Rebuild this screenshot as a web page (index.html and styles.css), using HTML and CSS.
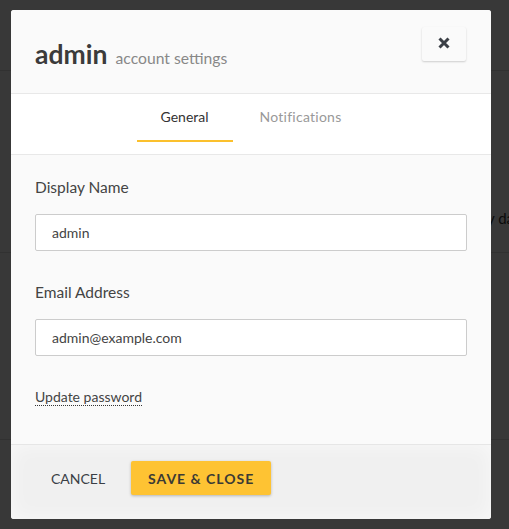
FILE: index.html
```html
<!DOCTYPE html>
<html>
<head>
<meta charset="utf-8">
<link rel="stylesheet" href="styles.css">
</head>
<body>
<div class="page">
  <div class="page-head"><span class="page-title">General</span></div>
  <div class="page-row"><span class="page-text">y data</span></div>
  <div class="page-row2"></div>
</div>
<div class="overlay"></div>
<div class="modal">
  <div class="modal-header">
    <h1 class="title"><span class="title-main">admin</span> <span class="title-sub">account settings</span></h1>
    <button class="close-btn" aria-label="Close">
      <svg width="14" height="14" viewBox="0 0 14 14"><path d="M2.5 2.5 L11.5 11.5 M11.5 2.5 L2.5 11.5" stroke="#3b3f46" stroke-width="3" stroke-linecap="butt"/></svg>
    </button>
  </div>
  <div class="tabs">
    <div class="tab active">General</div>
    <div class="tab">Notifications</div>
  </div>
  <div class="modal-body">
    <label class="field">
      <span class="field-label">Display Name</span>
      <input class="field-input" value="admin">
    </label>
    <label class="field">
      <span class="field-label">Email Address</span>
      <input class="field-input" value="admin@example.com">
    </label>
    <a class="link">Update password</a>
  </div>
  <div class="modal-footer">
    <button class="btn-cancel">CANCEL</button>
    <button class="btn-save">SAVE &amp; CLOSE</button>
  </div>
</div>
</body>
</html>
```
FILE: styles.css
```css
* { box-sizing: border-box; }
html, body { margin: 0; padding: 0; }
body {
  width: 509px;
  height: 529px;
  overflow: hidden;
  font-family: Lato, "Open Sans", sans-serif;
  background: #fff;
  position: relative;
}
.page { color: #333; }
.page-head {
  height: 71px;
  border-bottom: 1px solid #ddd;
  padding: 0 20px;
}
.page-title { font-size: 24px; line-height: 28px; display: inline-block; padding-top: 4px; }
.page-row {
  height: 182px;
  border-bottom: 1px solid #ddd;
  padding: 138px 0 0 487px;
  font-size: 15px;
  white-space: nowrap;
  overflow: hidden;
}
.page-text { display: inline-block; }
.page-row2 { height: 187px; border-bottom: 1px solid #ddd; }
.overlay {
  position: absolute;
  inset: 0;
  background: rgba(0, 0, 0, 0.78);
}
.modal {
  position: absolute;
  left: 11px;
  top: 10px;
  width: 480px;
  height: 509px;
  background: #fafafa;
  border-radius: 3px;
  overflow: hidden;
  display: flex;
  flex-direction: column;
}
.modal-header {
  height: 84px;
  border-bottom: 1px solid #e8e8e8;
  display: flex;
  align-items: flex-start;
  justify-content: space-between;
  padding: 0 25px 0 24px;
  background: #fafafa;
}
.title { margin: 27px 0 0 0; font-weight: 400; line-height: 30px; white-space: nowrap; }
.title-main { font-size: 26.5px; font-weight: 700; color: #3b3b3b; }
.title-sub { font-size: 15.7px; color: #888; margin-left: 0; }
.close-btn {
  margin-top: 17px;
  width: 44px;
  height: 34px;
  border: none;
  background: #fafafa;
  border-radius: 2px;
  box-shadow: 0 1px 2px rgba(0,0,0,0.18);
  display: flex;
  align-items: center;
  justify-content: center;
  padding: 0 0 2px 0;
}
.tabs {
  height: 61px;
  background: #fff;
  border-bottom: 1px solid #e8e8e8;
  display: flex;
  justify-content: center;
  padding-left: 0;
}
.tab {
  font-size: 14px;
  color: #999;
  text-align: center;
  padding: 14px 24px 0;
  height: 48px;
}
.tab + .tab { padding-left: 27px; letter-spacing: 0.25px; }
.tab.active {
  color: #333;
  border-bottom: 2px solid #fbc02d;
}
.modal-body {
  flex: 1;
  padding: 23px 24px 0 24px;
  display: flex;
  flex-direction: column;
  align-items: flex-start;
}
.field { display: flex; flex-direction: column; width: 100%; margin-bottom: 32px; }
.field-label { font-size: 15.5px; color: #444; line-height: 18px; margin-bottom: 18px; }
.field-input {
  width: 432px;
  height: 37px;
  border: 1px solid #ccc;
  border-radius: 2px;
  background: #fff;
  font-family: Lato, "Open Sans", sans-serif;
  font-size: 14px;
  color: #444;
  padding: 0 16px;
  outline: none;
}
.link {
  font-size: 14px;
  color: #444;
  border-bottom: 1px dotted #333;
  line-height: 16px;
  margin-top: 1px;
}
.modal-footer {
  height: 75px;
  background: #f0f0f0;
  border-top: 1px solid #e6e6e6;
  box-shadow: inset 0 0 20px rgba(255,255,255,0.6);
  display: flex;
  align-items: center;
  padding: 0 0 8px 24px;
  gap: 10px;
}
.btn-cancel {
  border: none;
  background: transparent;
  font-family: Lato, "Open Sans", sans-serif;
  font-size: 14px;
  color: #3b3f46;
  padding: 0 16px;
  height: 34px;
}
.btn-save {
  border: none;
  background: #fec333;
  border-radius: 2px;
  box-shadow: 0 1px 3px rgba(0,0,0,0.25);
  font-family: Lato, "Open Sans", sans-serif;
  font-weight: 700;
  font-size: 14px;
  letter-spacing: 1px;
  color: #3b3a35;
  width: 140px;
  height: 34px;
}
```
